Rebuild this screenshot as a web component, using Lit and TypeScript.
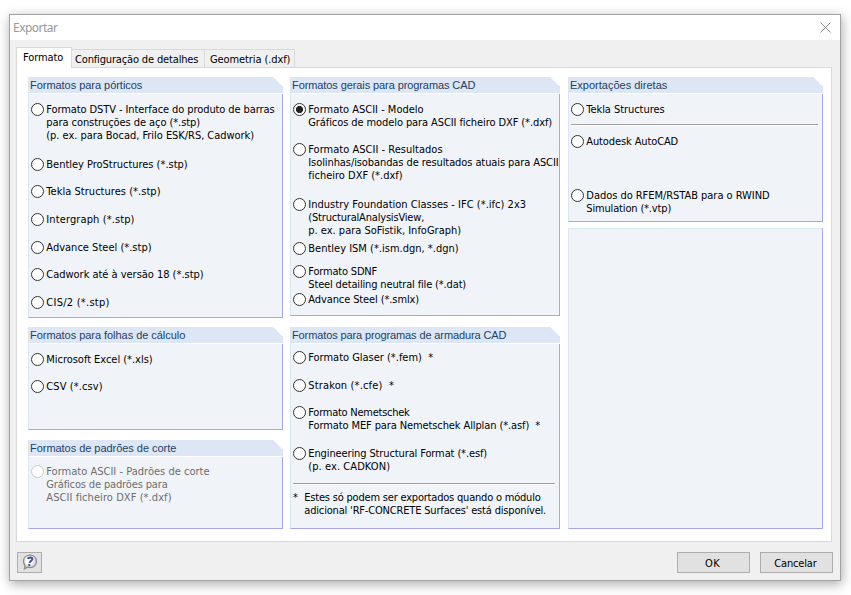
import { LitElement, html, css, svg, nothing } from "lit";
import { customElement, property } from "lit/decorators.js";

type Line = [text: string, width: number];
interface Item { gap: number; lines?: Line[]; rule?: boolean; note?: boolean; checked?: boolean; disabled?: boolean; }

/** One line of text whose tracking is adjusted to a given width. */
@customElement("fit-text")
class FitText extends LitElement {
  static styles = css`
    :host { display: block; white-space: pre; }
    .t { display: inline-block; }
  `;
  @property() text = "";
  @property({ type: Number }) width = 0;
  updated() {
    const el = this.renderRoot.querySelector(".t") as HTMLElement;
    el.style.letterSpacing = "0px";
    const natural = el.getBoundingClientRect().width;
    el.style.letterSpacing = `${(this.width + 0.3 - natural) / this.text.length}px`;
  }
  render() { return html`<span class="t">${this.text}</span>`; }
}

const fit = ([text, width]: Line) => html`<fit-text .text=${text} .width=${width}></fit-text>`;

@customElement("group-panel")
class GroupPanel extends LitElement {
  static styles = css`
    :host { display: block; box-sizing: border-box; }
    .panel { height: 100%; box-sizing: border-box; display: flex; flex-direction: column; background: #f0f4f9;
      border-left: 1px solid #dbe6f4; border-right: 1px solid #a6a6ec; border-bottom: 1px solid #a6a6ec; }
    .cut { clip-path: polygon(0 0, calc(100% - 10px) 0, 100% 10px, 100% 100%, 0 100%); }
    .empty { border-top: 1px solid #dbe6f4; }
    .head { flex: none; height: 16px; margin-right: -1px; background: #dce6f4; border-bottom: 1px solid #fff;
      padding-left: 1px; font: 11px/17px "Liberation Sans", Arial, sans-serif; color: #1c4266; }
    .body { padding: 9px 4px 0 2px; }
    .item { display: flex; gap: 2.3px; font: 11px/13px "DejaVu Sans Condensed", "DejaVu Sans", sans-serif;
      font-stretch: condensed; color: #000; }
    .radio { flex: none; box-sizing: border-box; width: 13px; height: 13px; border: 1px solid #333; border-radius: 50%;
      background: #fff; }
    .on { background: radial-gradient(circle, #222 3.2px, #fff 3.9px); }
    .off { color: #6d6d6d; }
    .off .radio { border-color: #c8c8c8; }
    .rule { height: 1px; background: #a0a0a0; border-bottom: 1px solid #fff; }
    .star { width: 9px; }
  `;
  @property() heading?: Line;
  @property({ attribute: false }) items: Item[] = [];
  row(i: Item) {
    const style = `margin-top:${i.gap}px`;
    if (i.rule) return html`<div class="rule" style=${style}></div>`;
    return html`<div class="item ${i.disabled ? "off" : ""}" style=${style}>
      ${i.note ? html`<span class="star">*</span>` : html`<span class="radio ${i.checked ? "on" : ""}"></span>`}
      <div>${i.lines!.map(fit)}</div>
    </div>`;
  }
  render() {
    return html`<div class="panel ${this.heading ? "cut" : "empty"}">
      ${this.heading ? html`<div class="head">${fit(this.heading)}</div>` : nothing}
      <div class="body">${this.items.map((i) => this.row(i))}</div>
    </div>`;
  }
}

const frames: Item[] = [
  { gap: 0, lines: [["Formato DSTV - Interface do produto de barras", 228], ["para construções de aço (*.stp)", 153.5], ["(p. ex. para Bocad, Frilo ESK/RS, Cadwork)", 207.5]] },
  { gap: 16, lines: [["Bentley ProStructures (*.stp)", 141]] },
  { gap: 14, lines: [["Tekla Structures (*.stp)", 114]] },
  { gap: 15, lines: [["Intergraph (*.stp)", 88]] },
  { gap: 15, lines: [["Advance Steel (*.stp)", 105]] },
  { gap: 14, lines: [["Cadwork até à versão 18 (*.stp)", 157]] },
  { gap: 15, lines: [["CIS/2 (*.stp)", 63]] },
];
const sheets: Item[] = [
  { gap: 0, lines: [["Microsoft Excel (*.xls)", 106]] },
  { gap: 14, lines: [["CSV (*.csv)", 56]] },
];
const cutting: Item[] = [
  { gap: -1, disabled: true, lines: [["Formato ASCII - Padrões de corte", 163], ["Gráficos de padrões para", 121], ["ASCII ficheiro DXF (*.dxf)", 125]] },
];
const cad: Item[] = [
  { gap: 0, checked: true, lines: [["Formato ASCII - Modelo", 115], ["Gráficos de modelo para ASCII ficheiro DXF (*.dxf)", 243.5]] },
  { gap: 14, lines: [["Formato ASCII - Resultados", 134], ["Isolinhas/isobandas de resultados atuais para ASCII", 250], ["ficheiro DXF (*.dxf)", 94]] },
  { gap: 16, lines: [["Industry Foundation Classes - IFC (*.ifc) 2x3", 217.5], ["(StructuralAnalysisView,", 115.5], ["p. ex. para SoFistik, InfoGraph)", 152.5]] },
  { gap: 5, lines: [["Bentley ISM (*.ism.dgn, *.dgn)", 150]] },
  { gap: 10, lines: [["Formato SDNF", 68.5], ["Steel detailing neutral file (*.dat)", 157.5]] },
  { gap: 2, lines: [["Advance Steel (*.smlx)", 110.5]] },
];
const rebar: Item[] = [
  { gap: -2, lines: [["Formato Glaser (*.fem)  *", 124.5]] },
  { gap: 15, lines: [["Strakon (*.cfe)  *", 85.5]] },
  { gap: 14, lines: [["Formato Nemetschek", 101], ["Formato MEF para Nemetschek Allplan (*.asf)  *", 231.5]] },
  { gap: 15, lines: [["Engineering Structural Format (*.esf)", 178.5], ["(p. ex. CADKON)", 81.5]] },
  { gap: 10, rule: true },
  { gap: 6, note: true, lines: [["Estes só podem ser exportados quando o módulo", 236], ["adicional 'RF-CONCRETE Surfaces' está disponível.", 241.5]] },
];
const direct: Item[] = [
  { gap: 0, lines: [["Tekla Structures", 78]] },
  { gap: 8, rule: true },
  { gap: 9, lines: [["Autodesk AutoCAD", 91.5]] },
  { gap: 41, lines: [["Dados do RFEM/RSTAB para o RWIND", 183], ["Simulation (*.vtp)", 84.5]] },
];

@customElement("app-root")
class AppRoot extends LitElement {
  static styles = css`
    :host { display: block; box-sizing: border-box; width: 851px; height: 595px; padding: 14px 10px 14px 9px; background: #fff;
      overflow: hidden; font: 11px/13px "DejaVu Sans Condensed", "DejaVu Sans", sans-serif; font-stretch: condensed; color: #000; }
    .window { box-sizing: border-box; width: 832px; height: 567px; border: 1px solid #a3a3a3; background: #f0f0f0;
      box-shadow: 1px 3px 11px rgba(0, 0, 0, 0.34); display: flex; flex-direction: column; }
    .title { height: 25px; background: #fff; display: flex; justify-content: space-between; align-items: center;
      padding: 0 9px 0 3px; color: #999; font: 12px/16px "Noto Sans", sans-serif; }
    .tabs { height: 27px; padding: 7px 6px 0; box-sizing: border-box; display: flex; align-items: flex-end; }
    .tab { box-sizing: border-box; height: 18px; border: 1px solid #d9d9d9; border-width: 1px 1px 0 0; padding: 3px 0 0 3px; }
    .tab.active { height: 21px; width: 56px; border-left-width: 1px; background: #fff; padding: 3px 0 0 6px; margin-bottom: -1px; z-index: 1; }
    .details { width: 133px; }
    .tab.geometry { width: 90px; padding-left: 5px; }
    .page { box-sizing: border-box; width: 816px; height: 475px; margin-left: 6px; border: 1px solid #d9d9d9; background: #fff;
      padding: 9px 0 0 11px; display: grid; grid-template-columns: 262px 278px 255px; align-content: start; }
    .col { display: flex; flex-direction: column; align-items: flex-start; }
    .c1 group-panel, .c3 group-panel { width: 255px; }
    .c2 group-panel { width: 270px; }
    .frames { height: 241px; } .sheets { height: 103px; margin-top: 9px; } .cutting { height: 89px; margin-top: 10px; }
    .cad { height: 239px; } .rebar { height: 202px; margin-top: 11px; }
    .direct { height: 145px; } .blank { height: 301px; margin-top: 6px; }
    .footer { display: flex; padding: 10px 7px 0 7px; }
    .btn { box-sizing: border-box; height: 21px; border: 1px solid #adadad; background: #e1e1e1; display: flex;
      justify-content: center; align-items: center; }
    .help { width: 25px; margin-right: auto; padding-bottom: 1px; }
    .ok, .cancel { width: 73px; padding: 1px 2px 0 0; }
    .ok { margin-right: 10px; }
  `;
  render() {
    return html`<div class="window">
      <div class="title">
        ${fit(["Exportar", 44])}
        <svg width="11" height="11" viewBox="0 0 11 11">${svg`<path d="M.5 .5L10.5 10.5M10.5 .5L.5 10.5" stroke="#8c8c8c" fill="none"/>`}</svg>
      </div>
      <div class="tabs">
        <div class="tab active">${fit(["Formato", 40])}</div>
        <div class="tab details">${fit(["Configuração de detalhes", 123])}</div>
        <div class="tab geometry">${fit(["Geometria (.dxf)", 80])}</div>
      </div>
      <div class="page">
        <div class="col c1">
          <group-panel class="frames" .heading=${["Formatos para pórticos", 112]} .items=${frames}></group-panel>
          <group-panel class="sheets" .heading=${["Formatos para folhas de cálculo", 155]} .items=${sheets}></group-panel>
          <group-panel class="cutting" .heading=${["Formatos de padrões de corte", 146]} .items=${cutting}></group-panel>
        </div>
        <div class="col c2">
          <group-panel class="cad" .heading=${["Formatos gerais para programas CAD", 183]} .items=${cad}></group-panel>
          <group-panel class="rebar" .heading=${["Formatos para programas de armadura CAD", 214]} .items=${rebar}></group-panel>
        </div>
        <div class="col c3">
          <group-panel class="direct" .heading=${["Exportações diretas", 97]} .items=${direct}></group-panel>
          <group-panel class="blank"></group-panel>
        </div>
      </div>
      <div class="footer">
        <div class="btn help">
          <svg width="16" height="16" viewBox="0 0 17 17">
            <defs><radialGradient id="g" cx=".45" cy=".4" r=".6"><stop offset=".4" stop-color="#fff"/><stop offset="1" stop-color="#bdbdbd"/></radialGradient></defs>
            <path d="M8.5 1.2C12.6 1.2 15.3 4 15.3 7.8S12.6 14.4 8.5 14.4C7.5 14.4 6.6 14.3 5.8 14L2.6 15.8L3.2 12.4C2.2 11.2 1.600 9.600 1.600 7.800C1.600 4 4.400 1.200 8.500 1.200Z" fill="url(#g)" stroke="#8d8d8d" stroke-width="1.400"/>
            <path d="M6 5.300C6.800 3.500 11 3 11 5.300C11 7.300 8.600 7.100 8.100 9.600" fill="none" stroke="#3a4ca2" stroke-width="2"/>
            <circle cx="7.700" cy="11.900" r="1.200" fill="#3a4ca2"/>
          </svg>
        </div>
        <div class="btn ok">${fit(["OK", 14.5])}</div>
        <div class="btn cancel">${fit(["Cancelar", 42])}</div>
      </div>
    </div>`;
  }
}
